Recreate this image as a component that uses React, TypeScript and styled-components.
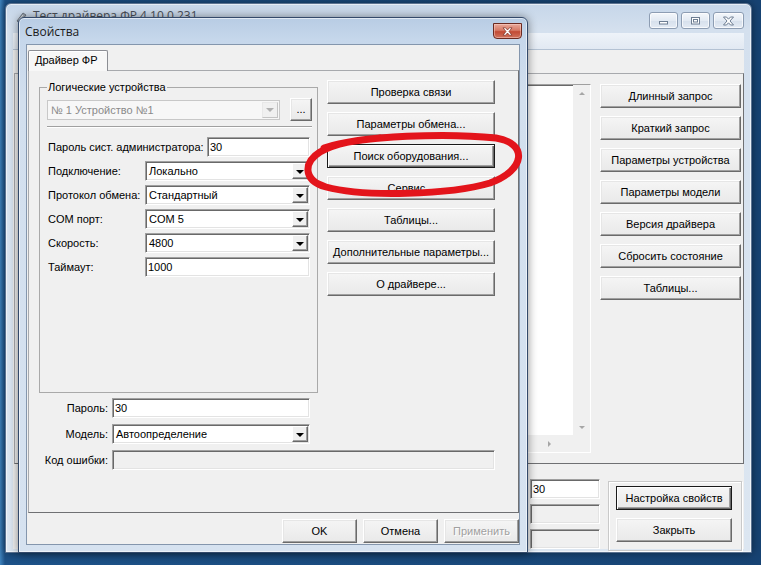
import React from 'react';
import styled, { createGlobalStyle, css } from 'styled-components';

const GlobalStyle = createGlobalStyle`
  html, body {
    margin: 0;
    padding: 0;
  }
  body {
    font-family: "Liberation Sans", Arial, sans-serif;
    font-size: 11px;
    color: #000;
  }
`;

const Desktop = styled.div`
  position: relative;
  width: 761px;
  height: 565px;
  overflow: hidden;
  background: linear-gradient(90deg, #3f83bd 0px, #1d5288 5px, #174373 100%);
`;

// windows sit on the desktop at their own place
const WindowFrame = styled.div<{ $x: number; $y: number; $w: number; $h: number; $active?: boolean }>`
  position: absolute;
  left: ${(p) => p.$x}px;
  top: ${(p) => p.$y}px;
  width: ${(p) => p.$w}px;
  height: ${(p) => p.$h}px;
  box-sizing: border-box;
  display: flex;
  flex-direction: column;
  padding: 0 7px ${(p) => (p.$active ? 7 : 3)}px;
  border: 1px solid ${(p) => (p.$active ? '#33496a' : '#5b7290')};
  border-radius: 6px 6px 0 0;
  background: ${(p) =>
    p.$active
      ? 'linear-gradient(180deg, #b8cce4 0px, #c6d7eb 22px, #d2dfee 80px, #d6e2f0 100%)'
      : 'linear-gradient(180deg, #c6d6e9 0px, #d4e0ee 26px, #dce6f1 100%)'};
  box-shadow: inset 0 0 0 1px rgba(255, 255, 255, 0.55), 0 0 10px rgba(0, 0, 0, 0.45);
`;

const TitleBar = styled.div<{ $h: number }>`
  display: flex;
  align-items: flex-start;
  height: ${(p) => p.$h}px;
  flex-shrink: 0;
`;

const TitleText = styled.span<{ $top: number; $left: number; $dim?: boolean }>`
  margin-top: ${(p) => p.$top}px;
  margin-left: ${(p) => p.$left}px;
  font-family: "Open Sans", "Noto Sans", sans-serif;
  font-size: 12px;
  line-height: 16px;
  color: ${(p) => (p.$dim ? '#4a4f57' : '#1a1a1a')};
  white-space: nowrap;
`;

const AppIcon = styled.svg`
  margin-top: 8px;
  margin-left: 2px;
  flex-shrink: 0;
`;

const CaptionGroup = styled.div`
  display: flex;
  gap: 3px;
  margin-left: auto;
  margin-top: 8px;
`;

const CaptionButton = styled.div<{ $w: number }>`
  box-sizing: border-box;
  width: ${(p) => p.$w}px;
  height: 17px;
  display: flex;
  align-items: center;
  justify-content: center;
  border: 1px solid #8d9db3;
  border-radius: 3px;
  background: linear-gradient(180deg, #f4f7fb 0%, #e3eaf3 50%, #d6e0ec 51%, #e4ebf4 100%);
  box-shadow: inset 0 0 0 1px rgba(255, 255, 255, 0.7);
`;

const DialogClose = styled.div`
  box-sizing: border-box;
  width: 29px;
  height: 16px;
  margin-top: 5px;
  margin-left: auto;
  margin-right: -2px;
  display: flex;
  align-items: center;
  justify-content: center;
  border: 1px solid #6b2a21;
  border-radius: 0 0 4px 4px;
  background: linear-gradient(180deg, #e9a99b 0%, #d67a66 45%, #c24a34 55%, #d0735e 100%);
  box-shadow: inset 0 0 0 1px rgba(255, 220, 210, 0.45);
`;

const MenuBand = styled.div`
  height: 16px;
  flex-shrink: 0;
  background: linear-gradient(180deg, #eef3f9, #e2e9f2);
  border-bottom: 1px solid #b4c2d3;
`;

const Client = styled.div<{ $bordered?: boolean }>`
  flex: 1;
  display: flex;
  flex-direction: column;
  min-height: 0;
  background: #f0f0f0;
  ${(p) =>
    p.$bordered &&
    css`
      border: 1px solid #8496ad;
    `}
`;

const TabStrip = styled.div<{ $h: number; $top?: number }>`
  display: flex;
  height: ${(p) => p.$h}px;
  margin-top: ${(p) => p.$top ?? 0}px;
  padding-left: 1px;
  flex-shrink: 0;
  position: relative;
  z-index: 1;
`;

const Tab = styled.div`
  box-sizing: border-box;
  width: 80px;
  height: 21px;
  padding-left: 6px;
  line-height: 19px;
  background: #f7f7f7;
  border: 1px solid #8c8e94;
  border-bottom: none;
  border-radius: 2px 2px 0 0;
  box-shadow: inset 1px 1px 0 #fff;
`;

const TabPanel = styled.div<{ $h?: number }>`
  box-sizing: border-box;
  ${(p) => (p.$h ? `height: ${p.$h}px;` : 'flex: 1;')}
  margin-left: 1px;
  border: 1px solid;
  border-color: #a7a9ad #6f7073 #6f7073 #a7a9ad;
  background: #f0f0f0;
  flex-shrink: 0;
`;

const BgPanelBody = styled.div`
  display: flex;
  gap: 9px;
  height: 100%;
  box-sizing: border-box;
  padding: 10px 2px 10px 10px;
`;

const Memo = styled.div`
  flex: 1;
  display: grid;
  grid-template-columns: 1fr 17px;
  grid-template-rows: 1fr 17px;
  border: 1px solid;
  border-color: #a0a0a0 #fff #fff #a0a0a0;
  box-shadow: inset 1px 1px 0 #696969;
  background: #fff;
`;

const ScrollTrack = styled.div<{ $dir: 'v' | 'h' }>`
  display: flex;
  flex-direction: ${(p) => (p.$dir === 'v' ? 'column' : 'row')};
  justify-content: ${(p) => (p.$dir === 'v' ? 'space-between' : 'flex-end')};
  align-items: center;
  background: #f0f0f0;
  padding: ${(p) => (p.$dir === 'v' ? '7px 0 6px' : '0 22px 0 0')};
`;

const ScrollCorner = styled.div`
  background: #f0f0f0;
`;

const Triangle = styled.span<{ $dir: 'up' | 'down' | 'right' }>`
  width: 0;
  height: 0;
  ${(p) =>
    p.$dir === 'up'
      ? css`
          border-left: 3px solid transparent;
          border-right: 3px solid transparent;
          border-bottom: 3px solid #a6a6a6;
        `
      : p.$dir === 'down'
      ? css`
          border-left: 3px solid transparent;
          border-right: 3px solid transparent;
          border-top: 3px solid #a6a6a6;
        `
      : css`
          border-top: 3px solid transparent;
          border-bottom: 3px solid transparent;
          border-left: 3px solid #a6a6a6;
        `}
`;

const ButtonColumn = styled.div<{ $w: number }>`
  display: flex;
  flex-direction: column;
  gap: 8px;
  width: ${(p) => p.$w}px;
  flex-shrink: 0;
`;

const Button = styled.div<{ $w?: number; $default?: boolean; $disabled?: boolean }>`
  box-sizing: border-box;
  width: ${(p) => (p.$w ? `${p.$w}px` : '100%')};
  height: 24px;
  flex-shrink: 0;
  display: flex;
  align-items: center;
  justify-content: center;
  white-space: nowrap;
  color: ${(p) => (p.$disabled ? '#a0a0a0' : '#000')};
  ${(p) => p.$disabled && 'text-shadow: 1px 1px 0 #fff;'}
  background: linear-gradient(180deg, #f5f5f5, #e9e9e9);
  ${(p) =>
    p.$default
      ? css`
          border: 1px solid #1a1a1a;
          box-shadow: inset 1px 1px 0 #fff, inset -1px -1px 0 #696969, inset -2px -2px 0 #a0a0a0;
        `
      : css`
          border: 1px solid;
          border-color: #fff #6a6a6a #6a6a6a #fff;
          box-shadow: inset -1px -1px 0 #a0a0a0, inset 1px 1px 0 #e6e6e6;
        `}
`;

const SmallButton = styled(Button)`
  width: 22px;
  height: 23px;
  align-items: flex-end;
  padding-bottom: 5px;
`;

const BgBottom = styled.div`
  height: 85px;
  flex-shrink: 0;
  display: flex;
  justify-content: flex-end;
  align-items: flex-start;
  gap: 8px;
  padding: 15px 2px 0 0;
  box-sizing: border-box;
`;

const FieldStack = styled.div`
  display: flex;
  flex-direction: column;
  gap: 5px;
`;

const CommandBox = styled.div`
  box-sizing: border-box;
  width: 134px;
  height: 70px;
  margin-top: 2px;
  padding: 4px 0 0 7px;
  display: flex;
  flex-direction: column;
  gap: 8px;
  border: 1px solid #c9c9c9;
  box-shadow: inset 1px 1px 0 #fff, 1px 1px 0 #fff;
`;

const Field = styled.div<{ $w: number; $disabled?: boolean }>`
  box-sizing: border-box;
  width: ${(p) => p.$w}px;
  height: 20px;
  flex-shrink: 0;
  display: flex;
  align-items: center;
  padding-left: 2px;
  background: ${(p) => (p.$disabled ? '#f0f0f0' : '#fff')};
  color: ${(p) => (p.$disabled ? '#8a8a8a' : '#000')};
  border: 1px solid;
  border-color: #a0a0a0 #fff #fff #a0a0a0;
  box-shadow: inset 1px 1px 0 #696969, inset -1px -1px 0 #e3e3e3;
  white-space: nowrap;
  overflow: hidden;
`;

const ComboValue = styled.span`
  flex: 1;
  padding-left: 1px;
`;

const DropButton = styled.div<{ $disabled?: boolean }>`
  box-sizing: border-box;
  width: 16px;
  height: 16px;
  margin-right: 1px;
  display: flex;
  align-items: center;
  justify-content: center;
  background: #f0f0f0;
  border: 1px solid;
  border-color: ${(p) => (p.$disabled ? '#e8e8e8 #c4c4c4 #c4c4c4 #e8e8e8' : '#fff #696969 #696969 #fff')};
  box-shadow: ${(p) => (p.$disabled ? 'none' : 'inset -1px -1px 0 #a0a0a0')};

  &::after {
    content: '';
    width: 0;
    height: 0;
    margin-top: 1px;
    border-left: 4px solid transparent;
    border-right: 4px solid transparent;
    border-top: 4px solid ${(p) => (p.$disabled ? '#b0b0b0' : '#000')};
  }
`;

const DisabledCombo = styled(Field)`
  background: #f7f7f7;
  color: #8a8a8a;
  border: 1px solid #c8c8c8;
  box-shadow: none;
`;

const TopRow = styled.div`
  display: flex;
  gap: 9px;
  padding: 9px 0 0 10px;
`;

const GroupBox = styled.fieldset`
  box-sizing: border-box;
  width: 279px;
  height: 313px;
  margin: 0;
  padding: 0 5px 0 7px;
  border: 1px solid #a9a9a9;
  min-inline-size: 0;
`;

const Legend = styled.legend`
  padding: 0 1px;
  line-height: 14px;
  font-size: 11px;
`;

const DeviceRow = styled.div`
  display: flex;
  align-items: center;
  gap: 10px;
  height: 23px;
  margin-top: 4px;
`;

const Separator = styled.div`
  margin-top: 5px;
  border-top: 1px solid #a0a0a0;
  border-bottom: 1px solid #fff;
`;

const FormRows = styled.div<{ $gap: number; $top: number }>`
  display: flex;
  flex-direction: column;
  gap: ${(p) => p.$gap}px;
  margin-top: ${(p) => p.$top}px;
`;

const FormRow = styled.div`
  display: flex;
  align-items: center;
  height: 20px;
`;

const Label = styled.span<{ $w: number; $right?: boolean }>`
  box-sizing: border-box;
  width: ${(p) => p.$w}px;
  flex-shrink: 0;
  white-space: nowrap;
  padding-left: ${(p) => (p.$right ? 0 : 1)}px;
  padding-right: ${(p) => (p.$right ? 4 : 0)}px;
  text-align: ${(p) => (p.$right ? 'right' : 'left')};
`;

const DialogButtons = styled.div`
  display: flex;
  justify-content: flex-end;
  gap: 6px;
  margin-top: 6px;
`;

// hand-drawn red mark over the dialog
const Ellipse = styled.svg`
  position: absolute;
  left: 281px;
  top: 107px;
  pointer-events: none;
  overflow: visible;
`;

type ComboProps = { w: number; value: string };

function Combo({ w, value }: ComboProps) {
  return (
    <Field $w={w}>
      <ComboValue>{value}</ComboValue>
      <DropButton />
    </Field>
  );
}

const bgButtons = [
  'Длинный запрос',
  'Краткий запрос',
  'Параметры устройства',
  'Параметры модели',
  'Версия драйвера',
  'Сбросить состояние',
  'Таблицы...',
];

const dialogButtons = [
  'Проверка связи',
  'Параметры обмена...',
  'Поиск оборудования...',
  'Сервис...',
  'Таблицы...',
  'Дополнительные параметры...',
  'О драйвере...',
];

const connectionRows: { label: string; value: string }[] = [
  { label: 'Подключение:', value: 'Локально' },
  { label: 'Протокол обмена:', value: 'Стандартный' },
  { label: 'COM порт:', value: 'COM 5' },
  { label: 'Скорость:', value: '4800' },
];

export default function App() {
  return (
    <>
      <GlobalStyle />
      <Desktop>
        {/* background window: driver test */}
        <WindowFrame $x={5} $y={3} $w={747} $h={550}>
          <TitleBar $h={29}>
            <AppIcon width="12" height="12" viewBox="0 0 12 12">
              <path d="M2 9 L8 1 L11 3 L5 11 Z" fill="#9aa3ad" stroke="#5d6670" strokeWidth="0.8" />
              <path d="M4 8 L8 3" stroke="#e4e8ec" strokeWidth="1" />
            </AppIcon>
            <TitleText $top={4} $left={6} $dim>
              Тест драйвера ФР 4.10.0.231
            </TitleText>
            <CaptionGroup>
              <CaptionButton $w={29}>
                <svg width="11" height="8" viewBox="0 0 11 8">
                  <rect x="1.5" y="4.5" width="8" height="2.5" fill="#fff" stroke="#6d7d92" />
                </svg>
              </CaptionButton>
              <CaptionButton $w={29}>
                <svg width="11" height="9" viewBox="0 0 11 9">
                  <rect x="1.5" y="1.5" width="8" height="6.5" fill="#fff" stroke="#6d7d92" />
                  <rect x="3.5" y="3.5" width="4" height="2.5" fill="#fff" stroke="#6d7d92" />
                </svg>
              </CaptionButton>
              <CaptionButton $w={31}>
                <svg width="13" height="10" viewBox="0 0 13 10">
                  <path
                    d="M1.5 1 L4.5 1 L6.5 3.2 L8.5 1 L11.5 1 L8 5 L11.5 9 L8.5 9 L6.5 6.8 L4.5 9 L1.5 9 L5 5 Z"
                    fill="#fff"
                    stroke="#6d7d92"
                    strokeWidth="1"
                  />
                </svg>
              </CaptionButton>
            </CaptionGroup>
          </TitleBar>
          <MenuBand />
          <Client>
            <TabStrip $h={23} />
            <TabPanel $h={391}>
              <BgPanelBody>
                <Memo>
                  <div />
                  <ScrollTrack $dir="v">
                    <Triangle $dir="up" />
                    <Triangle $dir="down" />
                  </ScrollTrack>
                  <ScrollTrack $dir="h">
                    <Triangle $dir="right" />
                  </ScrollTrack>
                  <ScrollCorner />
                </Memo>
                <ButtonColumn $w={141}>
                  {bgButtons.map((b) => (
                    <Button key={b}>{b}</Button>
                  ))}
                </ButtonColumn>
              </BgPanelBody>
            </TabPanel>
            <BgBottom>
              <FieldStack>
                <Field $w={70}>30</Field>
                <Field $w={70} $disabled />
                <Field $w={70} $disabled />
              </FieldStack>
              <CommandBox>
                <Button $w={116} $default>
                  Настройка свойств
                </Button>
                <Button $w={116}>Закрыть</Button>
              </CommandBox>
            </BgBottom>
          </Client>
        </WindowFrame>

        {/* properties dialog */}
        <WindowFrame $x={18} $y={17} $w={510} $h={536} $active>
          <TitleBar $h={26}>
            <TitleText $top={6} $left={-1}>
              Свойства
            </TitleText>
            <DialogClose>
              <svg width="11" height="9" viewBox="0 0 11 9">
                <path
                  d="M1 0.8 L3.6 0.8 L5.5 3 L7.4 0.8 L10 0.8 L7 4.5 L10 8.2 L7.4 8.2 L5.5 6 L3.6 8.2 L1 8.2 L4 4.5 Z"
                  fill="#fff"
                  stroke="#7a2a20"
                  strokeWidth="0.7"
                />
              </svg>
            </DialogClose>
          </TitleBar>
          <Client $bordered>
            <TabStrip $h={20} $top={5}>
              <Tab>Драйвер ФР</Tab>
            </TabStrip>
            <TabPanel $h={443}>
              <TopRow>
                <GroupBox>
                  <Legend>Логические устройства</Legend>
                  <DeviceRow>
                    <DisabledCombo $w={233}>
                      <ComboValue>№ 1 Устройство №1</ComboValue>
                      <DropButton $disabled />
                    </DisabledCombo>
                    <SmallButton>...</SmallButton>
                  </DeviceRow>
                  <Separator />
                  <FormRows $gap={4} $top={9}>
                    <FormRow>
                      <Label $w={160}>Пароль сист. администратора:</Label>
                      <Field $w={103}>30</Field>
                    </FormRow>
                    {connectionRows.map((r) => (
                      <FormRow key={r.label}>
                        <Label $w={98}>{r.label}</Label>
                        <Combo w={165} value={r.value} />
                      </FormRow>
                    ))}
                    <FormRow>
                      <Label $w={98}>Таймаут:</Label>
                      <Field $w={165}>1000</Field>
                    </FormRow>
                  </FormRows>
                </GroupBox>
                <ButtonColumn $w={168}>
                  {dialogButtons.map((b) => (
                    <Button key={b} $default={b === 'Поиск оборудования...'}>
                      {b}
                    </Button>
                  ))}
                </ButtonColumn>
              </TopRow>
              <FormRows $gap={6} $top={5}>
                <FormRow>
                  <Label $w={83} $right>
                    Пароль:
                  </Label>
                  <Field $w={198}>30</Field>
                </FormRow>
                <FormRow>
                  <Label $w={83} $right>
                    Модель:
                  </Label>
                  <Combo w={198} value="Автоопределение" />
                </FormRow>
                <FormRow>
                  <Label $w={83} $right>
                    Код ошибки:
                  </Label>
                  <Field $w={383} $disabled />
                </FormRow>
              </FormRows>
            </TabPanel>
            <DialogButtons>
              <Button $w={75}>OK</Button>
              <Button $w={75}>Отмена</Button>
              <Button $w={75} $disabled>
                Применить
              </Button>
            </DialogButtons>
          </Client>
          <Ellipse width="232" height="80" viewBox="0 0 232 80">
            <path
              d="M24 23 C 62 10, 150 8, 196 13 C 228 18, 226 45, 190 58 C 150 70, 62 72, 26 62 C 2 55, 4 37, 20 27 C 36 18, 56 15, 80 13"
              fill="none"
              stroke="#e3141b"
              strokeWidth="7"
              strokeLinecap="round"
              strokeLinejoin="round"
            />
          </Ellipse>
        </WindowFrame>
      </Desktop>
    </>
  );
}
